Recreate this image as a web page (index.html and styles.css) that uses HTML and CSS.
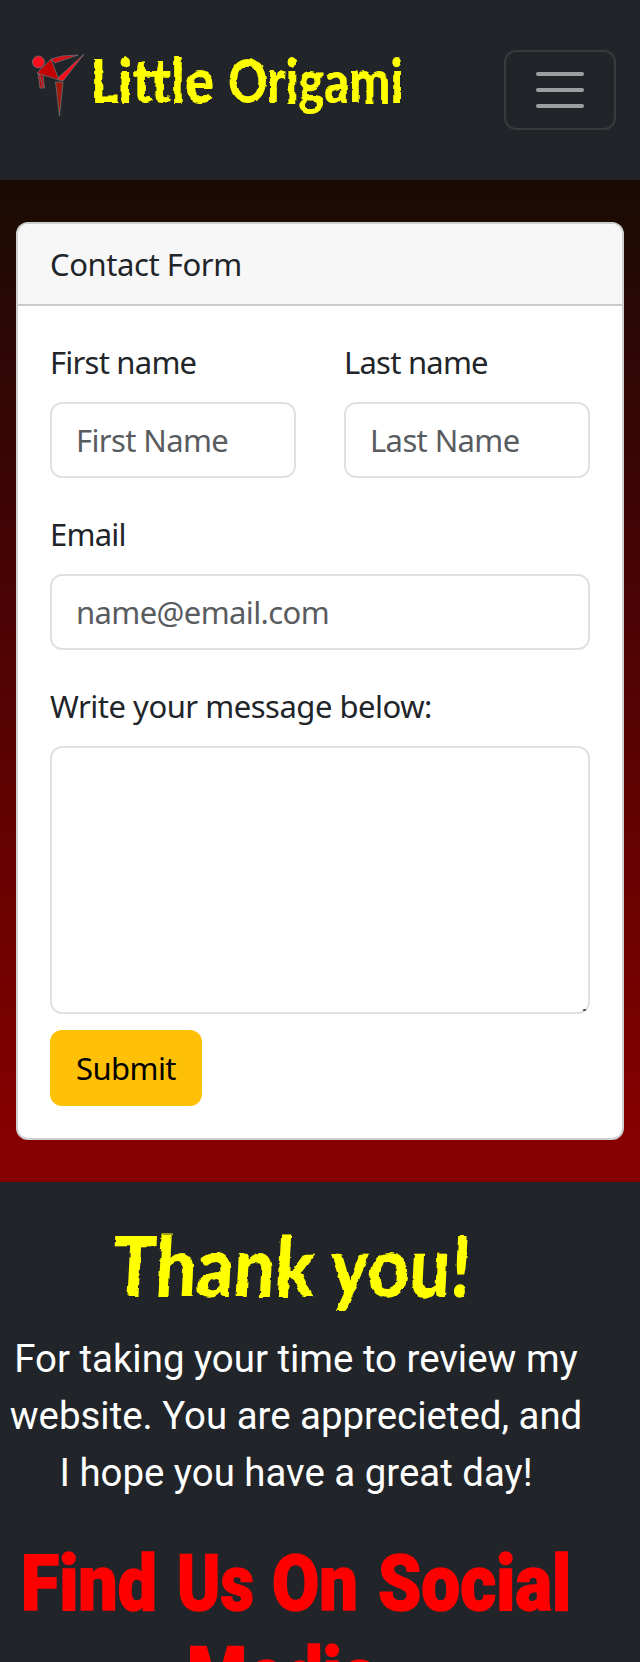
FILE: index.html
```html
<!DOCTYPE html>
<html lang="en">
<head>
<meta charset="utf-8">
<title>Little Origami</title>
<link rel="stylesheet" href="styles.css">
</head>
<body>
<nav class="navbar">
  <a class="brand">
    <svg class="brand-mark" viewBox="0 0 56 68" width="56" height="68">
      <g stroke="#6b6e72" stroke-width="0.8" stroke-linejoin="round">
        <path d="M6 22 L11 23 L12.500 37 L8 37Z" fill="#b90d0d"/>
        <path d="M7 22 L11 36" fill="none"/>
        <path d="M19 8 L30 5 L46 4 L23 12Z" fill="#d80c14"/>
        <path d="M5 22 L19 8 L27 29Z" fill="#c40000"/>
        <path d="M27 29 L26 27 L52 3 L31 30Z" fill="#fb0d1b"/>
        <path d="M23.500 31 L31 31 L27.500 65Z" fill="#a01a0c"/>
        <circle cx="6.500" cy="11" r="6" fill="#fb0d1b"/>
      </g>
    </svg>
    <svg class="brand-name" width="320" height="80" viewBox="0 -6 320 80">
      <defs>
        <filter id="brush" x="-5%" y="-10%" width="110%" height="120%">
          <feTurbulence type="fractalNoise" baseFrequency="0.07 0.12" numOctaves="2" seed="4" result="n"/>
          <feDisplacementMap in="SourceGraphic" in2="n" scale="4" xChannelSelector="R" yChannelSelector="G"/>
        </filter>
      </defs>
      <g class="brush-text" font-size="60" filter="url(#brush)">
        <text x="0" y="52" textLength="124" lengthAdjust="spacingAndGlyphs">Little</text>
        <text x="138" y="52" textLength="175" lengthAdjust="spacingAndGlyphs">Origami</text>
      </g>
    </svg>
  </a>
  <button class="toggler" aria-label="Menu"><span class="bar"></span><span class="bar"></span><span class="bar"></span></button>
</nav>
<main class="contact">
  <form class="card">
    <div class="card-header">Contact Form</div>
    <div class="card-body">
      <div class="row">
        <div class="field"><label class="label">First name</label><input class="control" placeholder="First Name"></div>
        <div class="field"><label class="label">Last name</label><input class="control" placeholder="Last Name"></div>
      </div>
      <div class="field"><label class="label">Email</label><input class="control" placeholder="name@email.com"></div>
      <div class="field message-field"><label class="label label-long">Write your message below:</label><textarea class="control message"></textarea><span class="grip"></span></div>
      <button class="submit" type="button">Submit</button>
    </div>
  </form>
</main>
<footer class="footer">
  <svg class="thanks" width="592" height="110" viewBox="0 0 592 110">
    <g class="brush-text" font-size="84" filter="url(#brush)">
      <text transform="translate(0 78) skewX(-3)" x="111" y="0" textLength="359" lengthAdjust="spacingAndGlyphs">Thank you!</text>
    </g>
  </svg>
  <p class="note">For taking your time to review my<br>website. You are apprecieted, and<br>I hope you have a great day!</p>
  <svg class="social" width="592" height="132" viewBox="0 0 592 132">
    <g class="social-text">
      <text x="21" y="79.500" textLength="136" lengthAdjust="spacingAndGlyphs">Find</text>
      <text x="177" y="79.500" textLength="77" lengthAdjust="spacingAndGlyphs">Us</text>
      <text x="272" y="79.500" textLength="86" lengthAdjust="spacingAndGlyphs">On</text>
      <text x="378" y="79.500" textLength="193" lengthAdjust="spacingAndGlyphs">Social</text>
      <text x="187" y="171.500" textLength="191" lengthAdjust="spacingAndGlyphs">Media</text>
    </g>
  </svg>
</footer>
</body>
</html>
```
FILE: styles.css
```css
* { box-sizing: border-box; }
html { overflow: hidden; }
body {
  margin: 0;
  width: 640px;
  height: 1662px;
  overflow: hidden;
  background: #212529;
  color: #212529;
  font: 31px/48px "Noto Sans", sans-serif;
}
svg { display: block; overflow: visible; }
.navbar {
  display: flex;
  justify-content: space-between;
  align-items: center;
  height: 180px;
  padding: 0 24px 0 32px;
  background: #212529;
}
.brand { display: flex; align-items: center; gap: 2px; padding-bottom: 10px; }
.brush-text { fill: #ff0; font-family: Lato, sans-serif; font-weight: 900; }
.toggler {
  display: flex;
  flex-direction: column;
  align-items: center;
  justify-content: center;
  gap: 12px;
  width: 112px;
  height: 80px;
  padding: 0;
  background: none;
  border: 2px solid #373b3e;
  border-radius: 12px;
}
.bar { width: 48px; height: 4px; border-radius: 2px; background: #9b9d9f; }
.contact {
  height: 1002px;
  padding: 42px 16px;
  background: linear-gradient(#1a0b04 0%, #400404 33%, #850000 95%, #850000 100%);
}
.card {
  height: 918px;
  background: #fff;
  border: 2px solid #cfcfcf;
  border-radius: 12px;
  overflow: hidden;
}
.card-header {
  height: 82px;
  padding: 16px 32px;
  background: #f7f7f7;
  border-bottom: 2px solid #cbcbcb;
  letter-spacing: -0.42px;
}
.card-body { padding: 32px; }
.row { display: grid; grid-template-columns: 1fr 1fr; gap: 48px; }
.field { margin-bottom: 32px; }
.label { display: block; margin-bottom: 16px; letter-spacing: -0.77px; }
.label-long { letter-spacing: -0.49px; }
.control {
  display: block;
  width: 100%;
  height: 76px;
  padding: 12px 24px;
  border: 2px solid #dee2e6;
  border-radius: 12px;
  background: #fff;
  font: inherit;
  letter-spacing: -0.62px;
}
.control::placeholder { color: #595c5f; opacity: 1; }
.message-field { position: relative; margin-bottom: 16px; }
.message { height: 268px; resize: none; }
.grip {
  position: absolute;
  right: 4px;
  bottom: 3px;
  width: 3px;
  height: 2px;
  background: #55585b;
  transform: skewX(-30deg);
}
.submit {
  width: 152px;
  height: 76px;
  padding: 0;
  border: 0;
  border-radius: 12px;
  background: #ffc107;
  color: #000;
  font: inherit;
  letter-spacing: -0.6px;
}
.footer { width: 592px; padding-top: 37px; color: #fff; }
.note {
  margin: 1px 0 0;
  white-space: nowrap;
  text-align: center;
  font: 38.4px/57px Roboto, sans-serif;
}
.social { margin-top: 29px; }
.social-text {
  fill: red;
  stroke: red;
  stroke-width: 1.5px;
  font-family: Roboto, sans-serif;
  font-size: 78px;
  font-weight: 900;
}
```
